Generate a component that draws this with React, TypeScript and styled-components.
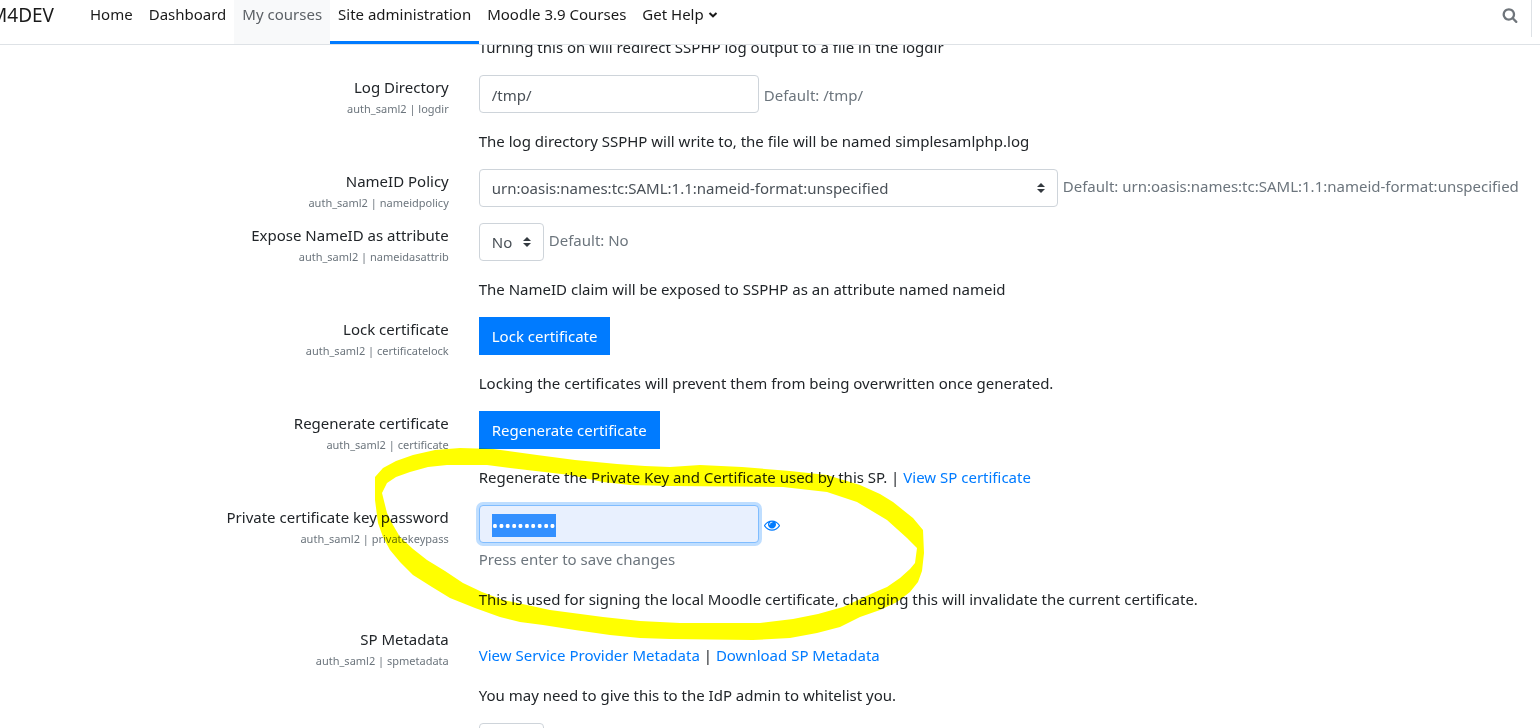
import React, { useEffect, useRef } from "react";
import styled, { createGlobalStyle } from "styled-components";

const GlobalStyle = createGlobalStyle`
  *, *::before, *::after { box-sizing: border-box; }
  body {
    margin: 0;
    background: #fff;
    color: #212529;
    font-family: "Noto Sans", "Open Sans", sans-serif;
    font-size: 15px;
    line-height: 24px;
  }
  input, select, button { font: inherit; margin: 0; }
`;

const Shell = styled.div`
  display: flex;
  flex-direction: column;
  height: 100vh;
  overflow: hidden;
`;

const Header = styled.header`
  display: flex;
  flex: none;
  height: 45px;
  border-bottom: 1px solid #dee2e6;
  background: #fff;
  overflow: hidden;
`;

const Brand = styled.a`
  display: flex;
  justify-content: flex-end;
  flex: none;
  width: 54px;
  margin-right: 28px;
  padding-top: 3px;
  color: #1a1a1a;
  font-size: 19px;
  text-decoration: none;
`;

const Nav = styled.nav`
  display: flex;
  flex: 1;
`;

const NavLink = styled.a<{ $state?: "hover" | "active" }>`
  display: flex;
  gap: 4px;
  padding: 2px 8px 0;
  white-space: nowrap;
  text-decoration: none;
  color: ${(p) => (p.$state === "hover" ? "#5c6166" : "#1a1a1a")};
  background: ${(p) => (p.$state === "hover" ? "#f8f9fa" : "none")};
  border-bottom: 3px solid ${(p) => (p.$state === "active" ? "#007bff" : "transparent")};
  svg { margin-top: 9px; }
`;

const Tools = styled.div`
  display: flex;
  height: 37px;
  margin-right: 8px;
  padding: 7px 13px 0 0;
  border-right: 1px solid #dee2e6;
`;

const IconButton = styled.button<{ $color: string }>`
  display: flex;
  align-self: flex-start;
  padding: 0;
  border: 0;
  background: none;
  color: ${(p) => p.$color};
`;

const Main = styled.main`
  display: flex;
  flex-direction: column;
  flex: 1;
  gap: 16px;
  min-height: 0;
  padding: 0 15px 0 110px;
  overflow: hidden;
`;

const Row = styled.div<{ $scrolled?: boolean }>`
  display: grid;
  grid-template-columns: minmax(0, 1fr) minmax(0, 3fr);
  flex: none;
  margin-top: ${(p) => (p.$scrolled ? "-10px" : "0")};
`;

const LabelCell = styled.div`
  display: flex;
  flex-direction: column;
  align-items: flex-end;
  height: 38px;
  padding-right: 15px;
  white-space: nowrap;
`;

const Key = styled.span`
  color: #6c757d;
  font-size: 11px;
  line-height: 20px;
`;

const Field = styled.div`
  position: relative;
  display: flex;
  flex-direction: column;
  gap: 16px;
  margin-left: 15px;
  white-space: nowrap;
`;

const Control = styled.div`
  display: flex;
  align-items: center;
  gap: 5px;
  height: 38px;
`;

const Stack = styled.div`
  display: flex;
  flex-direction: column;
  gap: 4px;
`;

const Description = styled.div<{ $spaced?: boolean }>`
  padding-top: ${(p) => (p.$spaced ? "16px" : "0")};
`;

const Muted = styled.span`
  color: #6c757d;
`;

const InputDefault = styled(Muted)`
  padding-top: 2px;
`;

const SelectDefault = styled(Muted)`
  padding-bottom: 4px;
`;

const TextInput = styled.input<{ $focused?: boolean }>`
  width: 280px;
  height: 38px;
  padding: 7px 12px 5px;
  border: 1px solid ${(p) => (p.$focused ? "#80bdff" : "#ced4da")};
  border-radius: 4px;
  background: ${(p) => (p.$focused ? "#e8f0fe" : "#fff")};
  box-shadow: ${(p) => (p.$focused ? "0 0 0 3px #bfdeff" : "none")};
  color: #495057;
  outline: 0;
  &[type="password"] { font-size: 17px; }
  &::selection { background: #3390ff; color: #fff; }
`;

const SelectBox = styled.div<{ $width: number }>`
  position: relative;
  width: ${(p) => p.$width}px;
  flex: none;
  svg {
    position: absolute;
    top: 14px;
    right: 13px;
    pointer-events: none;
  }
  select {
    width: 100%;
    height: 38px;
    padding: 6px 24px 6px 12px;
    border: 1px solid #ced4da;
    border-radius: 4px;
    background: #fff;
    color: #495057;
    appearance: none;
  }
`;

const PrimaryButton = styled.button`
  height: 38px;
  padding: 0 13px;
  border: 0;
  background: #007bff;
  color: #fff;
`;

const Link = styled.a`
  color: #007bff;
  text-decoration: none;
`;

const Marker = styled.svg`
  position: absolute;
  top: -65px;
  left: -109px;
  pointer-events: none;
  mix-blend-mode: multiply;
`;

function Select({ id, width, options, label }: { id: string; width: number; options: string[]; label?: string }) {
  return (
    <SelectBox $width={width}>
      <select id={id} aria-label={label}>
        {options.map((o) => (
          <option key={o}>{o}</option>
        ))}
      </select>
      <svg width="8" height="10" viewBox="0 0 4 5" aria-hidden="true">
        <path fill="#343a40" d="M2 0L0 2h4zm0 5L0 3h4z" />
      </svg>
    </SelectBox>
  );
}

function Setting(props: { title: string; name: string; id?: string; children: React.ReactNode }) {
  return (
    <Row>
      <LabelCell>
        {props.id ? <label htmlFor={props.id}>{props.title}</label> : <span>{props.title}</span>}
        <Key>auth_saml2 | {props.name}</Key>
      </LabelCell>
      <Field>{props.children}</Field>
    </Row>
  );
}

function Highlight() {
  return (
    <Marker width="560" height="210" viewBox="370 440 560 210" aria-hidden="true">
      <path
        fill="#ff0"
        fillRule="evenodd"
        d="M375 477L383 468L396 461L413 455L435 450L460 448L493 449L537 455L575 460L617 464L645 466L670 467L700 465L742 467L790 471L827 475L860 485L880 494L893 502L913 518L923 530L924 553L922 571L918 582L910 592L897 602L880 610L860 617L840 627L817 633L790 638L753 640L670 639L640 638L610 635L575 630L543 625L520 622L500 617L475 608L450 598L432 587L413 575L400 562L390 550L383 537L378 523L375 500Z
        M382 493L387 483L396 477L410 472L428 467L447 465L487 465L527 470L570 475L603 482L630 485L670 486L783 487L827 492L857 502L887 520L907 538L917 548L915 563L910 569L900 578L887 587L873 593L843 607L818 614L793 619L760 623L680 623L640 621L603 617L550 610L527 605L503 600L482 592L463 583L445 571L427 560L413 549L400 537L393 525L387 513Z"
      />
    </Marker>
  );
}

export default function App() {
  const password = useRef<HTMLInputElement>(null);

  useEffect(() => {
    password.current?.focus();
    password.current?.select();
  }, []);

  return (
    <Shell>
      <GlobalStyle />
      <Header>
        <Brand href="#">M4DEV</Brand>
        <Nav>
          <NavLink href="#">Home</NavLink>
          <NavLink href="#">Dashboard</NavLink>
          <NavLink href="#" $state="hover">My courses</NavLink>
          <NavLink href="#" $state="active">Site administration</NavLink>
          <NavLink href="#">Moodle 3.9 Courses</NavLink>
          <NavLink href="#">
            Get Help
            <svg width="10" height="8" viewBox="0 0 10 8" aria-hidden="true">
              <path d="M1.5 2L5 5.300L8.500 2" fill="none" stroke="currentColor" strokeWidth="2" />
            </svg>
          </NavLink>
        </Nav>
        <Tools>
          <IconButton $color="#6f757b" type="button" aria-label="Search">
            <svg width="16" height="16" viewBox="0 0 1792 1792" fill="currentColor" aria-hidden="true">
              <path d="M1216 832q0-185-131.500-316.500t-316.500-131.500-316.500 131.500-131.500 316.500 131.500 316.500 316.500 131.500 316.500-131.500 131.500-316.500zm512 832q0 52-38 90t-90 38q-54 0-90-38l-343-342q-179 124-399 124-143 0-273.500-55.500t-225-150-150-225-55.500-273.500 55.500-273.500 150-225 225-150 273.500-55.500 273.500 55.500 225 150 150 225 55.500 273.500q0 220-124 399l343 343q37 37 37 90z" />
            </svg>
          </IconButton>
        </Tools>
      </Header>
      <Main>
        <Row $scrolled>
          <span />
          <Field>Turning this on will redirect SSPHP log output to a file in the logdir</Field>
        </Row>
        <Setting title="Log Directory" name="logdir" id="logdir">
          <Control>
            <TextInput id="logdir" type="text" defaultValue="/tmp/" />
            <InputDefault>Default: /tmp/</InputDefault>
          </Control>
          <Description>The log directory SSPHP will write to, the file will be named simplesamlphp.log</Description>
        </Setting>
        <Setting title="NameID Policy" name="nameidpolicy" id="nameidpolicy">
          <Control>
            <Select id="nameidpolicy" width={579} options={["urn:oasis:names:tc:SAML:1.1:nameid-format:unspecified"]} />
            <SelectDefault>Default: urn:oasis:names:tc:SAML:1.1:nameid-format:unspecified</SelectDefault>
          </Control>
        </Setting>
        <Setting title="Expose NameID as attribute" name="nameidasattrib" id="nameidasattrib">
          <Control>
            <Select id="nameidasattrib" width={65} options={["No", "Yes"]} />
            <SelectDefault>Default: No</SelectDefault>
          </Control>
          <Description>The NameID claim will be exposed to SSPHP as an attribute named nameid</Description>
        </Setting>
        <Setting title="Lock certificate" name="certificatelock">
          <Control>
            <PrimaryButton type="button">Lock certificate</PrimaryButton>
          </Control>
          <Description>Locking the certificates will prevent them from being overwritten once generated.</Description>
        </Setting>
        <Setting title="Regenerate certificate" name="certificate">
          <Control>
            <PrimaryButton type="button">Regenerate certificate</PrimaryButton>
          </Control>
          <Description>
            Regenerate the Private Key and Certificate used by this SP. | <Link href="#">View SP certificate</Link>
          </Description>
        </Setting>
        <Setting title="Private certificate key password" name="privatekeypass" id="privatekeypass">
          <Stack>
            <Control>
              <TextInput id="privatekeypass" ref={password} type="password" defaultValue="moodlesaml" $focused />
              <IconButton $color="#007bff" type="button" aria-label="Reveal">
                <svg width="16" height="40" viewBox="0 0 1792 1792" fill="currentColor" aria-hidden="true">
                  <path d="M1664 960q-152-236-381-353 61 104 61 225 0 185-131.500 316.500t-316.500 131.500-316.500-131.500-131.500-316.500q0-121 61-225-229 117-381 353 133 205 333.500 326.500t434.500 121.500 434.500-121.500 333.500-326.500zm-720-384q0-20-14-34t-34-14q-125 0-214.500 89.500t-89.500 214.500q0 20 14 34t34 14 34-14 14-34q0-86 61-147t147-61q20 0 34-14t14-34zm848 384q0 34-20 69-140 230-376.500 368.500t-499.500 138.500-499.500-139-376.500-368q-20-35-20-69t20-69q140-229 376.500-368t499.500-139 499.500 139 376.500 368q20 35 20 69z" />
                </svg>
              </IconButton>
            </Control>
            <Muted>Press enter to save changes</Muted>
          </Stack>
          <Description>
            This is used for signing the local Moodle certificate, changing this will invalidate the current certificate.
          </Description>
          <Highlight />
        </Setting>
        <Setting title="SP Metadata" name="spmetadata">
          <Description $spaced>
            <Link href="#">View Service Provider Metadata</Link> | <Link href="#">Download SP Metadata</Link>
          </Description>
          <Description>You may need to give this to the IdP admin to whitelist you.</Description>
        </Setting>
        <Row>
          <span />
          <Field>
            <Select id="next-setting" label="Setting" width={65} options={["No", "Yes"]} />
          </Field>
        </Row>
      </Main>
    </Shell>
  );
}
